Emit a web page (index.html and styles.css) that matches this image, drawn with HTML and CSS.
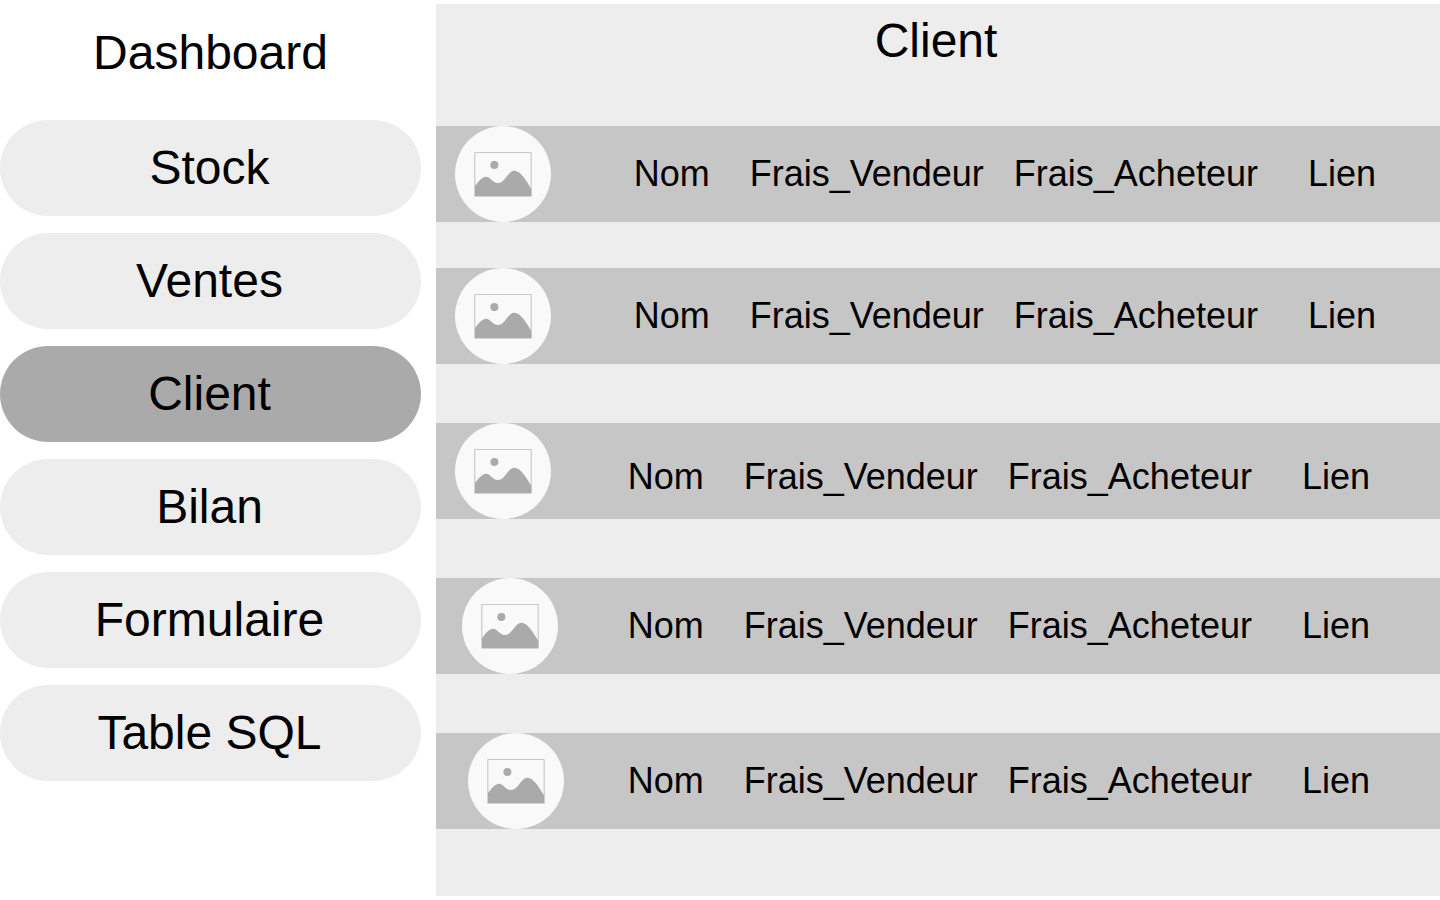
FILE: index.html
```html
<!DOCTYPE html>
<html lang="fr">
<head>
<meta charset="utf-8">
<title>Client</title>
<link rel="stylesheet" href="styles.css">
</head>
<body>
<svg class="sprite" aria-hidden="true">
  <symbol id="picture" viewBox="0 0 96 96">
    <rect x="19.800" y="26.500" width="56.400" height="43.700" rx="0.500" fill="none" stroke="#c9c9c9" stroke-width="1.200"/>
    <circle cx="39.400" cy="39" r="4" fill="#aaa"/>
    <path d="M20 60C23 56 27 50.700 31 50.700C35.500 50.700 37.500 57 43 57C50 57 53 44.700 59.300 44.700C65.500 44.700 71 54 76.200 62.700V70H20Z" fill="#aaa"/>
  </symbol>
</svg>
<div class="layout">
  <aside class="sidebar">
    <h1 class="brand">Dashboard</h1>
    <nav class="menu">
      <button class="menu-item" type="button">Stock</button>
      <button class="menu-item" type="button">Ventes</button>
      <button class="menu-item active" type="button" aria-current="page">Client</button>
      <button class="menu-item" type="button">Bilan</button>
      <button class="menu-item" type="button">Formulaire</button>
      <button class="menu-item" type="button">Table SQL</button>
    </nav>
  </aside>
  <main class="panel">
    <h2 class="title">Client</h2>
    <ul class="clients">
      <li class="client">
        <svg class="avatar"><use href="#picture"/></svg>
        <div class="fields"><span>Nom</span><span class="seller">Frais_Vendeur</span><span class="buyer">Frais_Acheteur</span><span class="link">Lien</span></div>
      </li>
      <li class="client">
        <svg class="avatar"><use href="#picture"/></svg>
        <div class="fields"><span>Nom</span><span class="seller">Frais_Vendeur</span><span class="buyer">Frais_Acheteur</span><span class="link">Lien</span></div>
      </li>
      <li class="client spaced inset low">
        <svg class="avatar"><use href="#picture"/></svg>
        <div class="fields"><span>Nom</span><span class="seller">Frais_Vendeur</span><span class="buyer">Frais_Acheteur</span><span class="link">Lien</span></div>
      </li>
      <li class="client spaced inset indent-1">
        <svg class="avatar"><use href="#picture"/></svg>
        <div class="fields"><span>Nom</span><span class="seller">Frais_Vendeur</span><span class="buyer">Frais_Acheteur</span><span class="link">Lien</span></div>
      </li>
      <li class="client spaced inset indent-2">
        <svg class="avatar"><use href="#picture"/></svg>
        <div class="fields"><span>Nom</span><span class="seller">Frais_Vendeur</span><span class="buyer">Frais_Acheteur</span><span class="link">Lien</span></div>
      </li>
    </ul>
  </main>
</div>
</body>
</html>
```
FILE: styles.css
```css
* {
  box-sizing: border-box;
}

body {
  margin: 0;
  background: #fff;
  color: #000;
  font-family: "Liberation Sans", Arial, sans-serif;
  font-size: 36px;
}

.sprite {
  display: none;
}

.layout {
  display: grid;
  grid-template-columns: 421px 1fr;
  column-gap: 15px;
  min-height: 100vh;
  padding: 4px 0;
}

.sidebar {
  padding-top: 21px;
}

.brand,
.title {
  margin: 0;
  font-size: 48px;
  font-weight: 400;
  line-height: 55px;
  text-align: center;
}

.menu {
  display: flex;
  flex-direction: column;
  gap: 17px;
  margin-top: 40px;
}

.menu-item {
  width: 100%;
  height: 96px;
  padding: 0 2px 2px 0;
  border: 0;
  border-radius: 48px;
  background: #ededed;
  color: inherit;
  font: inherit;
  font-size: 48px;
  line-height: 55px;
  cursor: pointer;
}

.menu-item.active {
  background: #aaa;
}

.panel {
  padding-top: 9px;
  background: #ededed;
}

.title {
  padding-right: 4px;
}

.clients {
  margin: 58px 0 0;
  padding: 0;
  list-style: none;
}

.client {
  display: flex;
  align-items: center;
  justify-content: space-between;
  height: 96px;
  padding: 0 64px 0 19px;
  background: #c6c6c6;
}

.client + .client {
  margin-top: 46px;
}

.client + .spaced {
  margin-top: 59px;
}

.inset {
  padding-right: 70px;
}

.indent-1 {
  padding-left: 26px;
}

.indent-2 {
  padding-left: 32px;
}

.avatar {
  flex: none;
  width: 96px;
  height: 96px;
  border-radius: 50%;
  background: #f9f9f9;
}

.fields {
  display: flex;
  padding-bottom: 2px;
  line-height: 41px;
  white-space: nowrap;
}

.low .fields {
  padding: 10px 0 0;
}

.seller {
  margin-left: 40px;
}

.buyer {
  margin-left: 30px;
}

.link {
  margin-left: 50px;
}
```
